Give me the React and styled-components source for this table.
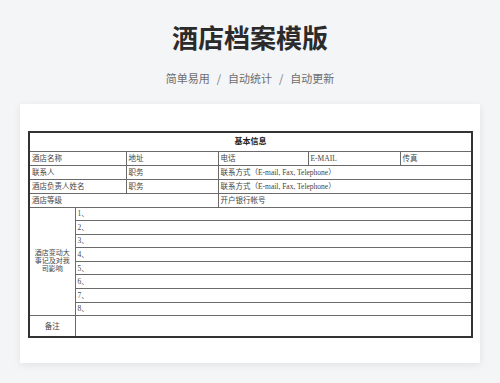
import React from 'react';
import styled, { createGlobalStyle } from 'styled-components';

const GlobalStyle = createGlobalStyle`
  body {
    margin: 0;
    background: #f4f5f7;
    font-family: "Noto Sans CJK SC", "Noto Sans", sans-serif;
  }
`;

const Page = styled.div`
  width: 500px;
  height: 383px;
  overflow: hidden;
  display: flex;
  flex-direction: column;
  align-items: center;
`;

const Title = styled.h1`
  margin: 21px 0 0;
  font-size: 26px;
  line-height: 31px;
  font-weight: 700;
  color: #2b2b2b;
`;

const Subtitle = styled.div`
  margin-top: 19px;
  font-size: 11px;
  line-height: 15px;
  color: #6e6e6e;
  display: flex;
  align-items: center;
`;

const Sep = styled.span`
  margin: 0 7px;
  color: #777;
`;

const Card = styled.div`
  margin-top: 18px;
  width: 460px;
  height: 259px;
  box-sizing: border-box;
  padding: 27px 9px 0 8px;
  background: #fff;
  box-shadow: 0 2px 8px rgba(0, 0, 0, 0.08);
`;

const Sheet = styled.table`
  width: 443px;
  table-layout: fixed;
  border-collapse: collapse;
  border: 2px solid #333;
  font-family: "Liberation Serif", "Noto Sans CJK SC", serif;
`;

const Row = styled.tr`
  height: ${p => p.h}px;
`;

const Cell = styled.td`
  border: 1px solid #6a6a6a;
  padding: 0 2px;
  font-size: 7.5px;
  line-height: 9px;
  color: #444;
  vertical-align: middle;
  text-align: ${p => (p.center ? 'center' : 'left')};
  white-space: nowrap;
  overflow: hidden;
`;

const HeadCell = styled(Cell)`
  text-align: center;
  font-size: 8px;
  font-weight: 700;
  color: #222;
`;

const LabelCell = styled(Cell)`
  text-align: center;
  white-space: normal;
  padding: 0 3px;
  font-size: 7px;
  line-height: 8px;
`;

const contactText = '联系方式（E-mail, Fax, Telephone）';

export default function App() {
  const events = [1, 2, 3, 4, 5, 6, 7, 8];
  return (
    <Page>
      <GlobalStyle />
      <Title>酒店档案模版</Title>
      <Subtitle>
        <span>简单易用</span>
        <Sep>/</Sep>
        <span>自动统计</span>
        <Sep>/</Sep>
        <span>自动更新</span>
      </Subtitle>
      <Card>
        <Sheet>
          <colgroup>
            <col style={{ width: 46 }} />
            <col style={{ width: 51 }} />
            <col style={{ width: 92 }} />
            <col style={{ width: 90 }} />
            <col style={{ width: 92 }} />
            <col style={{ width: 72 }} />
          </colgroup>
          <tbody>
            <Row h={19}>
              <HeadCell colSpan={6}>基本信息</HeadCell>
            </Row>
            <Row h={14}>
              <Cell colSpan={2}>酒店名称</Cell>
              <Cell>地址</Cell>
              <Cell>电话</Cell>
              <Cell>E-MAIL</Cell>
              <Cell>传真</Cell>
            </Row>
            <Row h={14}>
              <Cell colSpan={2}>联系人</Cell>
              <Cell>职务</Cell>
              <Cell colSpan={3}>{contactText}</Cell>
            </Row>
            <Row h={14}>
              <Cell colSpan={2}>酒店负责人姓名</Cell>
              <Cell>职务</Cell>
              <Cell colSpan={3}>{contactText}</Cell>
            </Row>
            <Row h={14}>
              <Cell colSpan={3}>酒店等级</Cell>
              <Cell colSpan={3}>开户银行帐号</Cell>
            </Row>
            {events.map((n, i) => (
              <Row h={13.6} key={n}>
                {i === 0 && (
                  <LabelCell rowSpan={8}>酒店变动大事记及对我司影响</LabelCell>
                )}
                <Cell colSpan={5}>{n}、</Cell>
              </Row>
            ))}
            <Row h={21}>
              <Cell center>备注</Cell>
              <Cell colSpan={5} />
            </Row>
          </tbody>
        </Sheet>
      </Card>
    </Page>
  );
}
